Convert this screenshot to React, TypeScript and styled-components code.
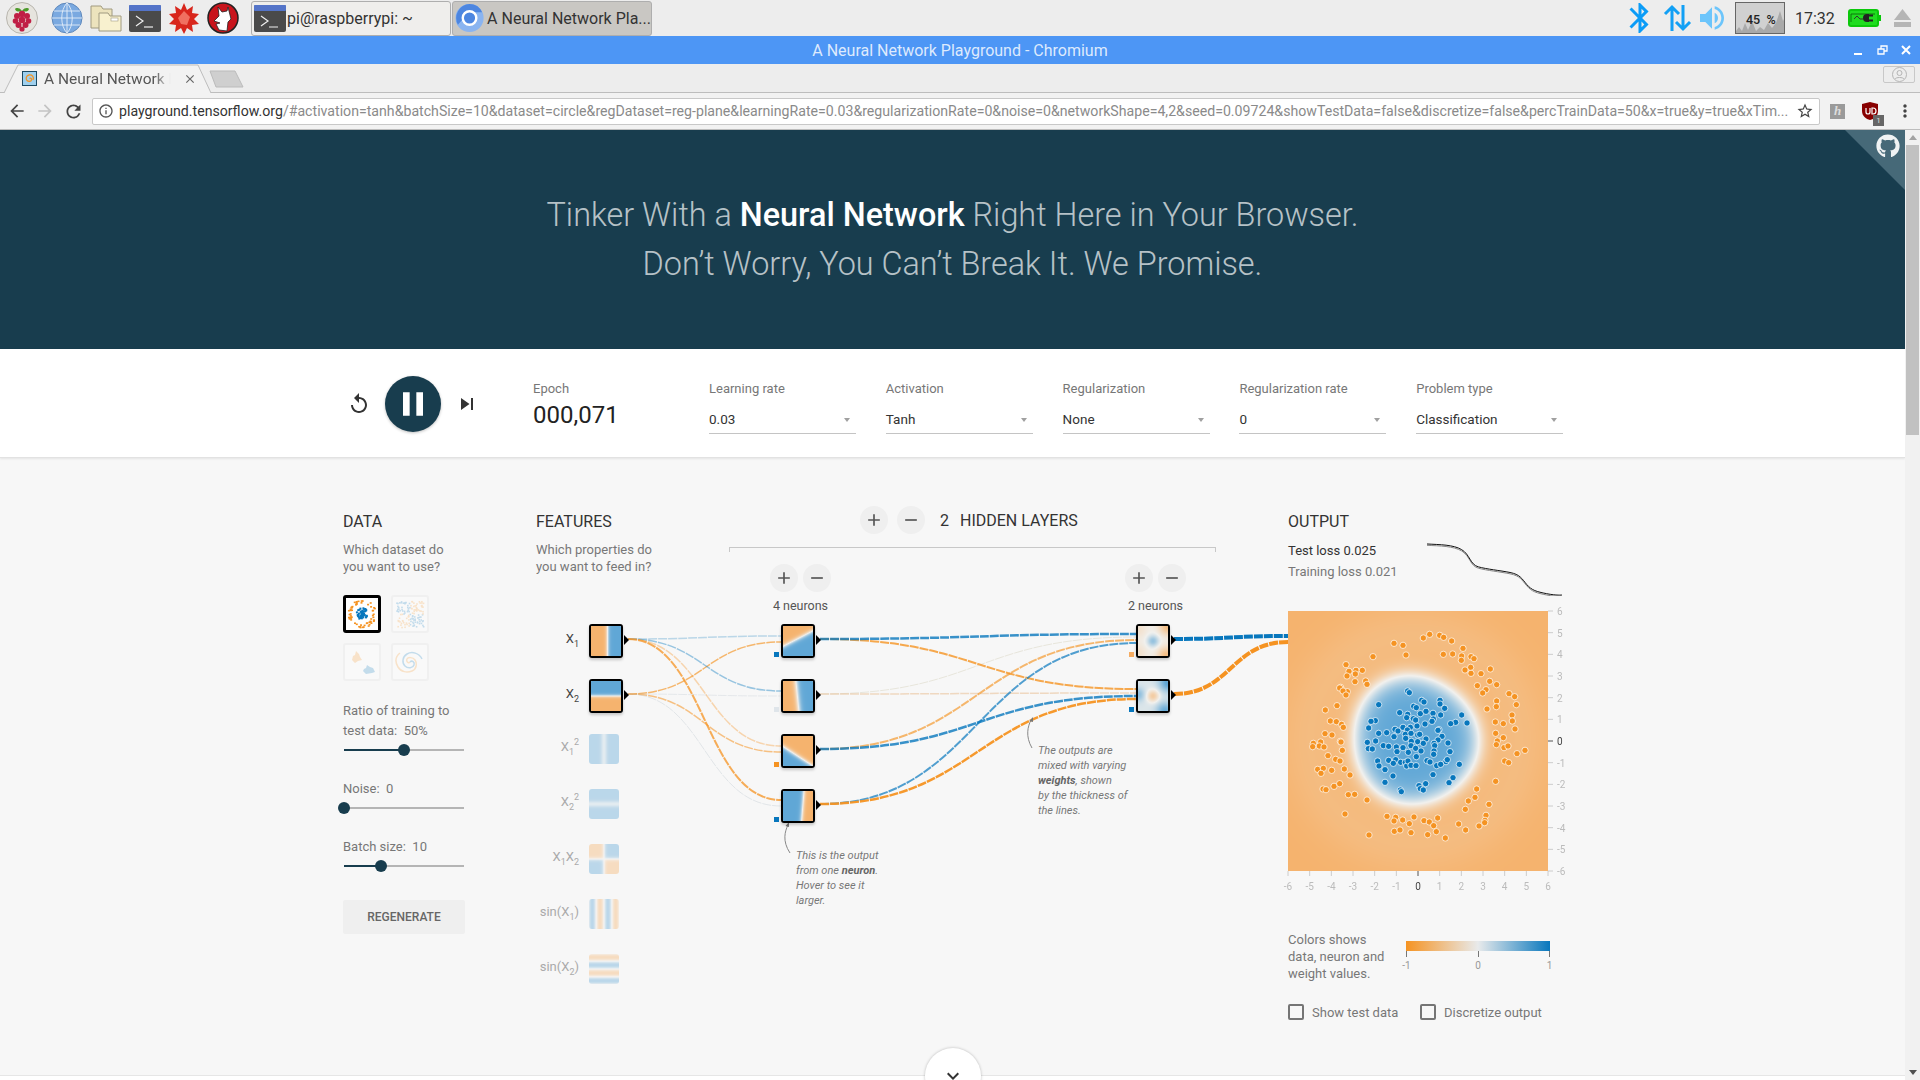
import React, { useEffect, useRef } from 'react';
import styled, { createGlobalStyle } from 'styled-components';
import {
  MdAdd,
  MdArrowBack,
  MdArrowForward,
  MdBluetooth,
  MdClose,
  MdInfoOutline,
  MdKeyboardArrowDown,
  MdMoreVert,
  MdPause,
  MdRefresh,
  MdRemove,
  MdReplay,
  MdSkipNext,
  MdStarBorder,
  MdVolumeUp,
} from 'react-icons/md';
import { FaGithub } from 'react-icons/fa';

const ORANGE = '#f59322';
const BLUE = '#0877bd';
const DARK = '#183d4e';

type HeatFn = (u: number, v: number) => number;

const GlobalStyle = createGlobalStyle`
  html, body {
    margin: 0;
    padding: 0;
    background: #ededed;
    font-family: Roboto, "Liberation Sans", sans-serif;
    overflow: hidden;
  }
  * { box-sizing: border-box; }
`;

const Screen = styled.div`
  width: 1920px;
  height: 1080px;
  display: flex;
  flex-direction: column;
  overflow: hidden;
`;

/* desktop panel */
const Panel = styled.div`
  height: 36px;
  flex: none;
  display: flex;
  align-items: center;
  background: #ededed;
  color: #333;
`;

const Launcher = styled.div`
  display: flex;
  align-items: center;
  width: 251px;
  padding-left: 6px;
  gap: 7px;
`;

const LaunchIcon = styled.svg<{ $gap?: number }>`
  width: 32px;
  height: 32px;
  flex: none;
  margin-left: ${p => p.$gap ?? 0}px;
`;

const Task = styled.div<{ $active?: boolean }>`
  height: 35px;
  width: 200px;
  display: flex;
  align-items: center;
  gap: 1px;
  padding-left: 2px;
  margin-right: 1px;
  font-size: 16px;
  white-space: nowrap;
  overflow: hidden;
  border: 1px solid #aeaeae;
  border-radius: 3px;
  background: ${p => (p.$active ? '#c9c7c3' : '#efeeec')};
`;

const Tray = styled.div`
  margin-left: auto;
  display: flex;
  align-items: center;
  height: 36px;
`;

const CpuBox = styled.div`
  position: relative;
  width: 50px;
  height: 32px;
  margin: 0 10px 0 7px;
  border: 1px solid #666;
  background: #d0d0d0;
  overflow: hidden;
`;

const CpuText = styled.span`
  position: absolute;
  left: 10px;
  top: 9px;
  font-size: 12.5px;
  font-weight: 500;
  color: #222;
  white-space: pre;
`;

const Clock = styled.span`
  font-size: 16px;
  color: #333;
  width: 53px;
`;

/* window title */
const TitleBar = styled.div`
  height: 28px;
  flex: none;
  position: relative;
  display: flex;
  align-items: center;
  justify-content: center;
  background: #4d96f5;
  color: rgba(255, 255, 255, 0.82);
  font-size: 16px;
`;

const WindowButtons = styled.div`
  position: absolute;
  right: 6px;
  top: 6px;
  display: flex;
  gap: 8px;
`;

const TabStrip = styled.div`
  height: 29px;
  flex: none;
  display: flex;
  background: #ededed;
  border-bottom: 1px solid #bdbdbd;
  position: relative;
`;

const ActiveTab = styled.div`
  position: relative;
  width: 209px;
  height: 29px;
  display: flex;
  align-items: center;
  padding-left: 22px;
  gap: 7px;
  flex: none;
`;

const TabShape = styled.svg`
  position: absolute;
  left: 0;
  top: 0;
`;

const TabTitle = styled.span`
  position: relative;
  width: 132px;
  white-space: nowrap;
  font-size: 15.5px;
  color: #555;
  -webkit-mask-image: linear-gradient(to right, #000 84%, transparent 96%);
`;

const NewTab = styled.svg`
  margin-top: 6px;
  flex: none;
`;

const ProfileButton = styled.div`
  position: absolute;
  right: 5px;
  top: 2px;
  width: 32px;
  height: 17px;
  border: 1px solid #c8c8c8;
  border-radius: 2px;
  display: flex;
  align-items: center;
  justify-content: center;
`;

const Toolbar = styled.div`
  height: 37px;
  flex: none;
  display: flex;
  align-items: center;
  background: #f2f2f2;
  border-bottom: 1px solid #bdbdbd;
  padding-left: 3px;
`;

const NavButton = styled.span<{ $faded?: boolean }>`
  width: 28px;
  height: 28px;
  flex: none;
  display: flex;
  align-items: center;
  justify-content: center;
  color: ${p => (p.$faded ? '#c4c4c4' : '#444')};
`;

const Omnibox = styled.div`
  width: 1728px;
  height: 27px;
  margin-left: 5px;
  flex: none;
  display: flex;
  align-items: center;
  background: #fff;
  border: 1px solid #c8c8c8;
  border-radius: 2px;
  padding: 0 5px 0 5px;
  gap: 5px;
  font-size: 14.15px;
  color: #8a8a8a;
  white-space: nowrap;
`;

const UrlText = styled.div`
  flex: 1;
  overflow: hidden;
  b {
    font-weight: 400;
    color: #333;
  }
`;

const Extensions = styled.div`
  display: flex;
  align-items: center;
  margin-left: 10px;
  gap: 15px;
`;

const HBadge = styled.span`
  width: 15px;
  height: 15px;
  background: #9a9a9a;
  color: #ddd;
  font-family: "Liberation Serif", serif;
  font-style: italic;
  font-weight: 700;
  font-size: 13px;
  display: flex;
  align-items: center;
  justify-content: center;
`;

const ShieldWrap = styled.span`
  position: relative;
  width: 20px;
  height: 20px;
  display: block;
`;

const ShieldCount = styled.span`
  position: absolute;
  right: -4px;
  bottom: -5px;
  width: 11px;
  height: 11px;
  background: #666;
  color: #ddd;
  font-size: 8px;
  line-height: 11px;
  text-align: center;
`;

/* page */
const Viewport = styled.div`
  flex: 1;
  display: flex;
  min-height: 0;
`;

const Page = styled.div`
  position: relative;
  width: 1905px;
  flex: none;
  background: #fff;
  overflow: hidden;
  display: flex;
  flex-direction: column;
`;

const Scrollbar = styled.div`
  flex: 1;
  background: #f1f1f1;
  display: flex;
  flex-direction: column;
  align-items: center;
  padding-top: 5px;
`;

const ScrollUp = styled.span`
  width: 0;
  height: 0;
  border-left: 4px solid transparent;
  border-right: 4px solid transparent;
  border-bottom: 5px solid #a3a3a3;
`;

const ScrollThumb = styled.div`
  width: 13px;
  height: 290px;
  margin-top: 5px;
  background: #c1c1c1;
`;

const ScrollDown = styled.span`
  width: 0;
  height: 0;
  margin-top: auto;
  margin-bottom: 5px;
  border-left: 4px solid transparent;
  border-right: 4px solid transparent;
  border-top: 5px solid #505050;
`;

const Hero = styled.header`
  position: relative;
  height: 219px;
  flex: none;
  background: ${DARK};
  display: flex;
  flex-direction: column;
  align-items: center;
  justify-content: center;
  color: rgba(255, 255, 255, 0.7);
  font-size: 32.4px;
  font-weight: 300;
  line-height: 49px;
  b {
    font-weight: 500;
    color: #fff;
  }
`;

const GithubCorner = styled.div`
  position: absolute;
  right: 0;
  top: 0;
  width: 60px;
  height: 60px;
  background: #466978;
  clip-path: polygon(0 0, 100% 0, 100% 100%);
  color: #f0f3f4;
  display: flex;
  justify-content: flex-end;
  padding: 4px 5px 0 0;
`;

const ControlBar = styled.div`
  height: 109px;
  flex: none;
  background: #fff;
  border-bottom: 1px solid #e2e2e2;
  box-shadow: 0 1px 2px rgba(0, 0, 0, 0.08);
  display: flex;
  padding-left: 347px;
  position: relative;
`;

const Transport = styled.div`
  display: flex;
  align-items: center;
  gap: 14px;
  height: 100%;
  padding-top: 1px;
  color: #333;
`;

const PlayButton = styled.div`
  width: 56px;
  height: 56px;
  border-radius: 50%;
  background: ${DARK};
  color: #fff;
  display: flex;
  align-items: center;
  justify-content: center;
  box-shadow: 0 1px 3px rgba(0, 0, 0, 0.25);
`;

const Field = styled.div<{ $width: number; $left?: number }>`
  width: ${p => p.$width}px;
  margin-left: ${p => p.$left ?? 29.8}px;
  padding-top: 32px;
  flex: none;
`;

const FieldLabel = styled.div`
  font-size: 13px;
  line-height: 16px;
  color: #777;
`;

const EpochValue = styled.div`
  font-size: 24px;
  line-height: 36px;
  color: #222;
`;

const SelectBox = styled.div`
  position: relative;
  height: 30px;
  margin-top: 7px;
  padding-top: 6px;
  line-height: 18px;
  font-size: 13.5px;
  color: #333;
  border-bottom: 1px solid #c4c4c4;
  &::after {
    content: '';
    position: absolute;
    right: 6px;
    top: 14px;
    border-left: 3.5px solid transparent;
    border-right: 3.5px solid transparent;
    border-top: 4px solid #a0a0a0;
  }
`;

const Main = styled.main`
  height: 617px;
  flex: none;
  background: #f7f7f7;
  display: flex;
  padding: 53px 0 0 343px;
`;

const DataColumn = styled.section`
  width: 193px;
  flex: none;
`;

const Heading = styled.h4`
  margin: 0 0 -2px;
  font-size: 16px;
  font-weight: 400;
  line-height: 22px;
  color: #333;
  text-transform: uppercase;
`;

const Hint = styled.p`
  margin: 10px 0 0;
  font-size: 13px;
  line-height: 17px;
  color: #777;
`;

const ThumbGrid = styled.div`
  display: grid;
  grid-template-columns: 38px 38px;
  gap: 10px;
  margin-top: 20px;
`;

const Thumb = styled.div<{ $selected?: boolean }>`
  width: 38px;
  height: 38px;
  border: ${p => (p.$selected ? '3px solid #000' : '2px solid #f0f0f0')};
  border-radius: 3px;
  background: ${p => (p.$selected ? '#fff' : '#f9f9f9')};
  svg {
    display: block;
    width: 100%;
    height: 100%;
    opacity: ${p => (p.$selected ? 1 : 0.22)};
  }
`;

const SliderLabel = styled.div<{ $top: number }>`
  margin-top: ${p => p.$top}px;
  font-size: 13px;
  line-height: 20px;
  color: #777;
  white-space: pre;
`;

const SliderTrack = styled.div`
  position: relative;
  width: 120px;
  height: 2px;
  margin: 8px 0 0 1px;
  background: #b5b5b5;
`;

const SliderFill = styled.div`
  height: 100%;
  background: ${DARK};
`;

const SliderThumb = styled.span`
  position: absolute;
  top: -5px;
  width: 12px;
  height: 12px;
  margin-left: -6px;
  border-radius: 50%;
  background: ${DARK};
`;

const RegenerateButton = styled.div`
  width: 122px;
  height: 34px;
  margin-top: 33px;
  background: #efefef;
  border-radius: 2px;
  display: flex;
  align-items: center;
  justify-content: center;
  font-size: 12px;
  font-weight: 500;
  color: #666;
`;

const NetworkColumn = styled.section`
  position: relative;
  width: 752px;
  flex: none;
`;

const NetworkHeader = styled.div`
  display: flex;
  align-items: flex-start;
`;

const FeaturesBlock = styled.div`
  width: 324px;
  flex: none;
`;

const LayerCount = styled.div`
  display: flex;
  align-items: center;
  margin-top: -5px;
  height: 28px;
  gap: 9px;
  position: relative;
  z-index: 2;
`;

const LayerCountText = styled.span`
  margin-left: 6px;
  font-size: 16px;
  color: #333;
  display: flex;
  gap: 11px;
  text-transform: uppercase;
`;

const RoundButton = styled.span`
  width: 28px;
  height: 28px;
  border-radius: 50%;
  background: #efefef;
  color: #555;
  display: flex;
  align-items: center;
  justify-content: center;
  flex: none;
`;

const Bracket = styled.div`
  position: absolute;
  left: 193px;
  top: 36px;
  width: 487px;
  height: 5px;
  border: 1px solid #c8c8c8;
  border-bottom: none;
`;

const LinkLayer = styled.svg`
  position: absolute;
  left: 0;
  top: 0;
  overflow: visible;
`;

const LayerControls = styled.div<{ $x: number }>`
  position: absolute;
  left: ${p => p.$x}px;
  top: 53px;
  width: 61px;
`;

const LayerButtons = styled.div`
  display: flex;
  gap: 5px;
`;

const NeuronCount = styled.div`
  margin-top: 6px;
  font-size: 12.5px;
  line-height: 16px;
  color: #555;
  text-align: center;
  white-space: nowrap;
`;

const FeatureRow = styled.div<{ $y: number; $active: boolean }>`
  position: absolute;
  left: 0;
  top: ${p => p.$y}px;
  display: flex;
  align-items: center;
  color: ${p => (p.$active ? '#444' : '#aaa')};
`;

const FeatureName = styled.div`
  width: 43px;
  margin: 0 10px 4px 0;
  text-align: right;
  font-size: 13px;
  line-height: 26px;
  white-space: nowrap;
  sub {
    font-size: 9px;
    vertical-align: -4px;
    line-height: 0;
  }
  sup {
    font-size: 9px;
    vertical-align: 6px;
    line-height: 0;
  }
`;

const Neuron = styled.div<{ $active: boolean }>`
  position: relative;
  width: ${p => (p.$active ? 34 : 30)}px;
  height: ${p => (p.$active ? 34 : 30)}px;
  border: ${p => (p.$active ? '2px solid #000' : 'none')};
  border-radius: 3px;
  box-shadow: ${p => (p.$active ? '0 2px 3px rgba(0, 0, 0, 0.2)' : 'none')};
  flex: none;
  canvas {
    display: block;
    border-radius: ${p => (p.$active ? 1 : 3)}px;
    opacity: ${p => (p.$active ? 1 : 0.4)};
  }
  &::after {
    content: ${p => (p.$active ? "''" : 'none')};
    position: absolute;
    right: -8px;
    top: 9px;
    border-left: 5px solid #000;
    border-top: 5px solid transparent;
    border-bottom: 5px solid transparent;
  }
`;

const HiddenNode = styled.div<{ $x: number; $y: number }>`
  position: absolute;
  left: ${p => p.$x}px;
  top: ${p => p.$y}px;
`;

const Bias = styled.span<{ $color: string }>`
  position: absolute;
  left: -9px;
  top: 26px;
  width: 5px;
  height: 5px;
  background: ${p => p.$color};
`;

const Callout = styled.p<{ $x: number; $y: number }>`
  position: absolute;
  left: ${p => p.$x}px;
  top: ${p => p.$y}px;
  margin: 0;
  font-size: 11px;
  font-style: italic;
  line-height: 15px;
  color: #777;
  white-space: nowrap;
  b {
    font-weight: 700;
    color: #666;
  }
`;

const OutputColumn = styled.section`
  width: 290px;
  flex: none;
  position: relative;
`;

const LossRow = styled.div`
  display: flex;
  height: 60px;
  margin-top: 9px;
`;

const LossText = styled.div`
  width: 139px;
  flex: none;
  font-size: 13px;
  line-height: 21px;
`;

const TestLoss = styled.div`
  color: #333;
`;

const TrainingLoss = styled.div`
  color: #777;
`;

const LossChart = styled.svg`
  width: 135px;
  height: 53px;
  margin-top: 3px;
  flex: none;
`;

const HeatBox = styled.div`
  position: relative;
  width: 260px;
  height: 260px;
  margin-top: 11px;
  canvas {
    display: block;
  }
`;

const Overlay = styled.svg`
  position: absolute;
  left: 0;
  top: 0;
  overflow: visible;
`;

const AxisText = styled.text<{ $zero?: boolean }>`
  font-family: Roboto, sans-serif;
  font-size: 10px;
  fill: ${p => (p.$zero ? '#444' : '#bbb')};
`;

const Legend = styled.div`
  display: flex;
  margin-top: 60px;
  height: 51px;
`;

const LegendText = styled.div`
  width: 118px;
  flex: none;
  font-size: 13px;
  line-height: 17px;
  color: #777;
`;

const LegendScale = styled.div`
  width: 144px;
  padding-top: 10px;
  flex: none;
`;

const GradientBar = styled.div`
  height: 10px;
  background: linear-gradient(to right, ${ORANGE}, #e8eaeb 50%, ${BLUE});
`;

const ScaleTicks = styled.div`
  display: flex;
  justify-content: space-between;
  font-size: 10px;
  line-height: 12px;
  color: #999;
`;

const ScaleTick = styled.span`
  width: 1px;
  height: 6px;
  background: #777;
  position: relative;
  display: block;
  margin-bottom: 3px;
`;

const ScaleItem = styled.span`
  width: 1px;
  display: flex;
  flex-direction: column;
  align-items: center;
  white-space: nowrap;
`;

const CheckRow = styled.div`
  display: flex;
  margin-top: 22px;
  height: 16px;
`;

const CheckItem = styled.label<{ $width: number }>`
  width: ${p => p.$width}px;
  display: flex;
  align-items: center;
  gap: 8px;
  font-size: 13px;
  color: #777;
  white-space: nowrap;
`;

const CheckBox = styled.span`
  width: 16px;
  height: 16px;
  flex: none;
  border: 2px solid #757575;
  border-radius: 2px;
`;

const Footer = styled.div`
  flex: 1;
  background: #fff;
  border-top: 1px solid #e6e6e6;
`;

const MoreButton = styled.div`
  position: absolute;
  left: 50%;
  top: 918px;
  width: 56px;
  height: 56px;
  margin-left: -28px;
  border-radius: 50%;
  background: #fff;
  box-shadow: 0 0 3px rgba(0, 0, 0, 0.25);
  color: #333;
  display: flex;
  justify-content: center;
  padding-top: 16px;
`;

/* heat maps */
const heatColor = (value: number): [number, number, number] => {
  const mid = [241, 240, 237];
  const end = value < 0 ? [245, 179, 110] : [96, 167, 214];
  const t = Math.min(1, Math.abs(value));
  return [0, 1, 2].map(i => mid[i] + (end[i] - mid[i]) * t) as [number, number, number];
};

const HeatCanvas: React.FC<{ fn: HeatFn; size: number }> = ({ fn, size }) => {
  const ref = useRef<HTMLCanvasElement>(null);
  useEffect(() => {
    const ctx = ref.current?.getContext('2d');
    if (!ctx) return;
    const image = ctx.createImageData(size, size);
    for (let y = 0; y < size; y++) {
      for (let x = 0; x < size; x++) {
        const [r, g, b] = heatColor(fn((x + 0.5) / size, (y + 0.5) / size));
        const at = (y * size + x) * 4;
        image.data[at] = r;
        image.data[at + 1] = g;
        image.data[at + 2] = b;
        image.data[at + 3] = 255;
      }
    }
    ctx.putImageData(image, 0, 0);
  }, [fn, size]);
  return <canvas ref={ref} width={size} height={size} />;
};

const blob: HeatFn = (u, v) => {
  const dx = u * 260 - 127;
  const dy = v * 260 - 129;
  const r = Math.hypot(dx, dy);
  const a = Math.atan2(dy, dx);
  const radius = 63 + 2.5 * Math.sin(2 * a) + 2 * Math.cos(2 * a + 2) + 1.5 * Math.cos(3 * a);
  const core = r < radius ? Math.tanh((radius - r) / 15) : Math.tanh((radius - r) / 11);
  const halo = r > radius ? 0.14 * Math.exp(-(((r - 105) / 30) ** 2)) : 0;
  return core + halo;
};

const bump = (u: number, v: number, cu: number, cv: number, spread: number) =>
  Math.exp(-((u - cu) ** 2 + (v - cv) ** 2) / spread);

const mixedUp: HeatFn = (u, v) =>
  0.65 * bump(u, v, 0.5, 0.5, 0.035) -
  0.85 * bump(u, v, 1, 0, 0.09) -
  0.85 * bump(u, v, 0.95, 1, 0.09) -
  0.25 * bump(u, v, 0, 0.9, 0.1) -
  0.25 * bump(u, v, 0, 0.1, 0.1);

const mixedDown: HeatFn = (u, v) =>
  -0.75 * bump(u, v, 0.5, 0.5, 0.04) +
  0.9 * bump(u, v, 1, 0.05, 0.09) +
  0.8 * bump(u, v, 0.9, 1, 0.08) +
  0.55 * bump(u, v, 0, 0.45, 0.05) +
  0.15;

const features: { name: React.ReactNode; active: boolean; fn: HeatFn }[] = [
  { name: <>X<sub>1</sub></>, active: true, fn: u => Math.tanh((u - 0.55) * 14) },
  { name: <>X<sub>2</sub></>, active: true, fn: (_, v) => -Math.tanh((v - 0.5) * 16) },
  { name: <>X<sub>1</sub><sup>2</sup></>, active: false, fn: u => 1 - 0.7 * Math.exp(-(((u - 0.5) / 0.1) ** 2)) },
  { name: <>X<sub>2</sub><sup>2</sup></>, active: false, fn: (_, v) => 1 - 0.7 * Math.exp(-(((v - 0.5) / 0.1) ** 2)) },
  { name: <>X<sub>1</sub>X<sub>2</sub></>, active: false, fn: (u, v) => Math.tanh((u - 0.5) * 14) * Math.tanh((0.5 - v) * 14) },
  { name: <>sin(X<sub>1</sub>)</>, active: false, fn: u => Math.sin(12 * (u - 0.5)) },
  { name: <>sin(X<sub>2</sub>)</>, active: false, fn: (_, v) => Math.sin(12 * (0.5 - v)) },
];

const hiddenNodes: { x: number; y: number; bias: string; fn: HeatFn }[] = [
  { x: 245, y: 113, bias: BLUE, fn: (u, v) => Math.tanh((v - (0.68 - 0.52 * u)) * 10) },
  { x: 245, y: 168, bias: '#dfe5ea', fn: (u, v) => Math.tanh((u - (0.43 + 0.1 * v)) * 9) },
  { x: 245, y: 223, bias: ORANGE, fn: (u, v) => Math.tanh((v - (0.35 + 0.65 * u)) * 10) },
  { x: 245, y: 278, bias: BLUE, fn: (u, v) => Math.tanh((0.7 - 0.08 * v - u) * 13) },
  { x: 600, y: 113, bias: '#f5ac62', fn: mixedUp },
  { x: 600, y: 168, bias: BLUE, fn: mixedDown },
];

type Link = [number, number, number, number, string, number, number];

const links: Link[] = [
  [92, 128, 245, 125, BLUE, 1.5, 0.25],
  [92, 183, 245, 131, ORANGE, 1.5, 0.65],
  [92, 128, 245, 180, BLUE, 1.5, 0.4],
  [92, 183, 245, 185, '#b8c4cc', 1, 0.3],
  [92, 128, 245, 235, ORANGE, 1.5, 0.35],
  [92, 183, 245, 241, ORANGE, 1.5, 0.55],
  [92, 128, 245, 289, ORANGE, 2, 0.75],
  [92, 183, 245, 295, '#b8c4cc', 1, 0.35],
  [284, 183, 600, 126, '#d8d4c0', 1, 0.5],
  [284, 183, 600, 182, '#e8b98a', 1.5, 0.5],
  [284, 128, 600, 178, ORANGE, 2, 0.8],
  [284, 238, 600, 129, ORANGE, 2, 0.65],
  [284, 293, 600, 132, BLUE, 2, 0.7],
  [284, 238, 600, 185, BLUE, 2.5, 0.8],
  [284, 293, 600, 188, ORANGE, 2.5, 0.95],
  [284, 128, 600, 123, BLUE, 2.5, 0.8],
  [638, 128, 752, 125, BLUE, 4, 1],
  [638, 183, 752, 131, ORANGE, 4, 1],
];

const curve = (x0: number, y0: number, x1: number, y1: number) => {
  const mid = (x0 + x1) / 2;
  return `M${x0} ${y0}C${mid} ${y0} ${mid} ${y1} ${x1} ${y1}`;
};

const orangeDots = [
  [460,414],[479,403],[509,406],[521,412],[545,423],[372,430],[399,436],[408,465],[309,470],[520,463],[548,462],[579,445],[575,468],[574,481],[603,470],[612,476],[602,502],[585,510],[603,520],[633,521],[661,507],[228,494],[237,514],[258,511],[277,511],[256,522],[231,528],[255,545],[287,543],[291,553],[212,562],[209,564],[232,575],[219,573],[228,585],[622,557],[659,544],[680,554],[648,569],[638,579],[717,581],[734,590],[739,614],[680,603],[679,620],[651,627],[201,617],[166,630],[726,645],[727,663],[676,666],[700,671],[735,687],[181,663],[199,665],[215,673],[220,682],[165,701],[186,705],[677,700],[700,713],[682,723],[679,734],[702,743],[714,738],[765,751],[741,761],[704,783],[716,788],[130,730],[128,740],[152,726],[148,738],[162,741],[211,724],[213,726],[217,751],[174,767],[197,778],[210,783],[223,807],[240,825],[143,808],[160,805],[153,820],[185,811],[159,867],[168,869],[192,859],[209,851],[235,884],[254,883],[291,900],[225,942],[677,844],[620,867],[615,892],[595,903],[586,928],[657,913],[648,946],[645,961],[644,968],[627,978],[587,990],[566,972],[503,954],[462,962],[478,966],[491,977],[499,995],[526,1014],[473,1004],[423,998],[418,971],[432,951],[398,960],[377,952],[372,963],[351,949],[373,994],[390,990],[297,1005],
];

const blueDots = [
  [413,573],[418,578],[455,601],[462,606],[510,601],[510,612],[524,625],[326,614],[431,619],[439,623],[389,638],[413,643],[410,653],[451,641],[468,634],[489,640],[512,645],[575,645],[591,669],[557,667],[542,671],[490,657],[486,664],[465,672],[430,656],[441,678],[437,660],[316,662],[303,664],[296,684],[326,700],[350,698],[375,688],[384,693],[399,682],[421,682],[412,690],[406,703],[407,715],[423,700],[443,705],[449,703],[372,710],[507,689],[504,691],[516,709],[504,720],[468,717],[443,725],[424,724],[460,730],[492,730],[494,737],[534,729],[292,727],[317,723],[295,746],[307,747],[340,737],[356,739],[379,741],[381,755],[399,743],[415,757],[423,737],[437,745],[453,753],[492,753],[491,763],[540,755],[439,770],[471,782],[480,786],[528,785],[532,779],[568,793],[323,783],[327,798],[345,809],[356,781],[377,779],[370,790],[392,787],[406,787],[410,798],[414,783],[423,796],[438,797],[500,797],[512,793],[489,824],[549,833],[537,848],[369,828],[345,847],[391,870],[394,875],[447,857],[451,866],[460,870],[467,851],
];

const axisValues = [-6, -5, -4, -3, -2, -1, 0, 1, 2, 3, 4, 5, 6];

/* deterministic scatter for the dataset thumbnails */
const scatter = (count: number, seed: number) => {
  let s = seed;
  const next = () => {
    s = (s * 9301 + 49297) % 233280;
    return s / 233280;
  };
  return Array.from({ length: count }, () => [next(), next()]);
};

const CircleThumb = () => (
  <svg viewBox="0 0 32 32">
    {scatter(60, 7).map(([a, b], i) => (
      <rect
        key={`o${i}`}
        x={16 + (10.5 + b * 3.5) * Math.cos(a * 6.28) - 1}
        y={16 + (10.5 + b * 3.5) * Math.sin(a * 6.28) - 1}
        width="2"
        height="1.6"
        fill={ORANGE}
      />
    ))}
    {scatter(50, 31).map(([a, b], i) => (
      <rect
        key={`b${i}`}
        x={16 + b * 6 * Math.cos(a * 6.28) - 1}
        y={16 + b * 6 * Math.sin(a * 6.28) - 1}
        width="2"
        height="2"
        fill={BLUE}
      />
    ))}
  </svg>
);

const XorThumb = () => (
  <svg viewBox="0 0 34 34">
    {scatter(130, 11).map(([a, b], i) => (
      <rect
        key={i}
        x={3 + a * 27}
        y={3 + b * 27}
        width="1.6"
        height="1.6"
        fill={(a - 0.5) * (b - 0.5) < 0 ? ORANGE : BLUE}
      />
    ))}
  </svg>
);

const GaussThumb = () => (
  <svg viewBox="0 0 34 34">
    <path d="M11 6l3 3 1 3 2 3-4 1-3 2-3-3 1-4 2-1z" fill={ORANGE} />
    <path d="M22 20l3 2 3 1 2 4-3 1-6 1-3-3 1-2 2-1z" fill={BLUE} />
  </svg>
);

const SpiralThumb = () => (
  <svg viewBox="0 0 34 34" fill="none" strokeWidth="1.5">
    <path d="M17 17c2-2 5 0 4 3s-6 4-9 1-3-9 2-12 12-1 15 5" stroke={BLUE} />
    <path d="M17 17c-2 2-4-1-3-3s6-2 8 1 2 9-3 11-11 1-14-4-3-10 2-14" stroke={ORANGE} />
  </svg>
);

const Slider: React.FC<{ percent: number }> = ({ percent }) => (
  <SliderTrack>
    <SliderFill style={{ width: `${percent}%` }} />
    <SliderThumb style={{ left: `${percent}%` }} />
  </SliderTrack>
);

const TerminalIcon: React.FC<{ gap?: number }> = ({ gap }) => (
  <LaunchIcon $gap={gap} viewBox="0 0 32 32">
    <rect x="0" y="3" width="32" height="27" rx="2" fill="#4a4a4a" />
    <rect x="0" y="3" width="32" height="6" rx="1" fill="#5474c8" />
    <path d="M7 14l7 5-7 5" fill="none" stroke="#eee" strokeWidth="1.2" />
    <path d="M15 25h9" stroke="#eee" strokeWidth="1.2" />
  </LaunchIcon>
);

const LOSS_PATH =
  'M471 128C510 130 550 130 575 145S600 190 625 197 690 208 720 214 755 232 770 250 800 272 830 278 876 282 876 282';

const App: React.FC = () => (
  <Screen>
    <GlobalStyle />
    <Panel>
      <Launcher>
        <LaunchIcon viewBox="0 0 32 32">
          <circle cx="16" cy="16" r="15.5" fill="#e6e4de" stroke="#b8b6ae" />
          <path d="M16 9c-3-4-6-3-7-2 1 3 4 3 7 2zm0 0c3-4 6-3 7-2-1 3-4 3-7 2z" fill="#4c9a2a" />
          <g fill="#c01f45">
            <circle cx="16" cy="12" r="3.2" />
            <circle cx="11" cy="14" r="3" />
            <circle cx="21" cy="14" r="3" />
            <circle cx="9.5" cy="19" r="2.8" />
            <circle cx="22.5" cy="19" r="2.8" />
            <circle cx="16" cy="18" r="3.3" />
            <circle cx="12.5" cy="23" r="3" />
            <circle cx="19.5" cy="23" r="3" />
            <circle cx="16" cy="27" r="2.6" />
          </g>
        </LaunchIcon>
        <LaunchIcon $gap={6} viewBox="0 0 32 32">
          <circle cx="16" cy="16" r="15" fill="#7aa9e0" stroke="#5f88bb" />
          <path d="M1 16h30M3 9h26M3 23h26M16 1v30M16 1c-7 7-7 23 0 30M16 1c7 7 7 23 0 30" fill="none" stroke="#e3edf8" strokeWidth="0.9" />
        </LaunchIcon>
        <LaunchIcon viewBox="0 0 32 32">
          <path d="M1 4h10l2 3h9v19H1z" fill="#ece3bd" stroke="#a09a80" />
          <path d="M9 11h9l2 3h11v15H9z" fill="#f8f1cf" stroke="#a09a80" />
          <rect x="21" y="16" width="7" height="3" fill="#fff" stroke="#a09a80" strokeWidth="0.6" />
        </LaunchIcon>
        <TerminalIcon />
        <LaunchIcon viewBox="0 0 32 32">
          <path
            d="M16 1l3 7 6-4-1 7 7 1-5 5 5 5-7 1 1 7-6-4-3 6-3-6-6 4 1-7-7-1 5-5-5-5 7-1-1-7 6 4z"
            fill="#d8261c"
          />
          <path d="M16 9l6 6-3 8-6-1-3-6z" fill="#f07060" />
        </LaunchIcon>
        <LaunchIcon viewBox="0 0 32 32">
          <circle cx="16" cy="16" r="15" fill="#c8141c" stroke="#222" strokeWidth="1.5" />
          <path d="M11 5l4 5 5-1 1-4 3 12-3 3-1 9-8-1-3-6 4-1-6-2 5-5z" fill="#fff" stroke="#222" strokeWidth="0.8" />
        </LaunchIcon>
      </Launcher>
      <Task>
        <TerminalIcon />
        pi@raspberrypi: ~
      </Task>
      <Task $active>
        <svg width="30" height="30" viewBox="0 0 30 30" style={{ marginRight: 2 }}>
          <circle cx="15" cy="15" r="14.5" fill="#8ab4f0" />
          <path d="M15 .5A14.5 14.5 0 0 0 3 22l7-8a5 5 0 0 1 5-5h13A14.5 14.5 0 0 0 15 .5z" fill="#4d86e0" />
          <circle cx="15" cy="15" r="7" fill="#4d86e0" stroke="#fff" strokeWidth="2.5" />
        </svg>
        <span>A Neural Network Pla...</span>
      </Task>
      <Tray>
        <MdBluetooth size={36} color="#0b9cf7" />
        <svg width="30" height="30" viewBox="0 0 30 30" style={{ marginLeft: 4 }} fill="none" stroke="#12a0f5" strokeWidth="3">
          <path d="M10 28V4M3 11l7-7 7 7" />
          <path d="M21 2v24M14 19l7 7 7-7" />
        </svg>
        <MdVolumeUp size={32} color="#6cc5fb" style={{ marginLeft: 4 }} />
        <CpuBox>
          <svg width="50" height="32" viewBox="0 0 50 32">
            <path d="M0 32V28L3 24 6 28 9 20 12 27 16 18 20 28 24 24 28 27 32 20 36 25 40 20 44 8 47 18 50 12V32Z" fill="#a9a9a9" />
          </svg>
          <CpuText>45  %</CpuText>
        </CpuBox>
        <Clock>17:32</Clock>
        <svg width="33" height="18" viewBox="0 0 33 18" style={{ marginRight: 13 }}>
          <rect x="1" y="1" width="29" height="16" rx="2" fill="#1fdc1f" stroke="#0bc80b" strokeWidth="2" />
          <rect x="30.500" y="6" width="2.500" height="6" fill="#0bc80b" />
          <path d="M3 5h24M3 5v8" stroke="#0a5a0a" strokeWidth="0.8" fill="none" />
          <path d="M6 10l3-3 3 3h3" stroke="#333" strokeWidth="1" fill="none" />
          <path d="M15 9a4 4 0 0 1 4-4h2v8h-2a4 4 0 0 1-4-4z" fill="#222" />
          <path d="M21 6.500h4M21 11.500h4" stroke="#222" strokeWidth="1.800" />
        </svg>
        <svg width="17" height="18" viewBox="0 0 17 18" style={{ marginRight: 9 }}>
          <path d="M8.500 0l8.500 11H0z" fill="#b5b5b5" />
          <rect x="0" y="13" width="17" height="5" fill="#b5b5b5" />
        </svg>
      </Tray>
    </Panel>

    <TitleBar>
      A Neural Network Playground - Chromium
      <WindowButtons>
        <svg width="16" height="16" viewBox="0 0 16 16"><path d="M4 12h8" stroke="#fff" strokeWidth="2" /></svg>
        <svg width="16" height="16" viewBox="0 0 16 16" fill="none" stroke="#fff" strokeWidth="1.3"><path d="M4 7h6v5H4zM7 7V4h6v5h-3" /></svg>
        <svg width="16" height="16" viewBox="0 0 16 16"><path d="M4 4l8 8M12 4l-8 8" stroke="#fff" strokeWidth="2" /></svg>
      </WindowButtons>
    </TitleBar>

    <TabStrip>
      <ActiveTab>
        <TabShape width="214" height="29" viewBox="0 0 214 29">
          <path d="M4 29L18 1H198L211 29" fill="#f2f2f2" stroke="#bdbdbd" />
        </TabShape>
        <svg width="15" height="15" viewBox="0 0 15 15" style={{ position: 'relative' }}>
          <rect x="0.5" y="0.5" width="14" height="14" fill="#9fd0ee" stroke="#1d4b63" />
          <path d="M7.5 7.5c1-1 2.5 0 2 1.500s-3 2-4.500.5-1-5 2-5.500 5.500 2 4 5" fill="none" stroke="#f59322" strokeWidth="1.300" />
        </svg>
        <TabTitle>A Neural Network P</TabTitle>
        <MdClose size={14} color="#666" style={{ position: 'relative' }} />
      </ActiveTab>
      <NewTab width="36" height="18" viewBox="0 0 36 18">
        <path d="M1 1H26L34 17H7z" fill="#cfcfcf" stroke="#bbb" />
      </NewTab>
      <ProfileButton>
        <svg width="15" height="15" viewBox="0 0 15 15" fill="none" stroke="#b5b5b5">
          <circle cx="7.5" cy="7.5" r="7" />
          <circle cx="7.5" cy="6" r="2.500" />
          <path d="M3 12c1-2 8-2 9 0" />
        </svg>
      </ProfileButton>
    </TabStrip>

    <Toolbar>
      <NavButton><MdArrowBack size={20} /></NavButton>
      <NavButton $faded><MdArrowForward size={20} /></NavButton>
      <NavButton><MdRefresh size={21} /></NavButton>
      <Omnibox>
        <MdInfoOutline size={16} color="#555" />
        <UrlText>
          <b>playground.tensorflow.org</b>
          /#activation=tanh&amp;batchSize=10&amp;dataset=circle&amp;regDataset=reg-plane&amp;learningRate=0.03&amp;regularizationRate=0&amp;noise=0&amp;networkShape=4,2&amp;seed=0.09724&amp;showTestData=false&amp;discretize=false&amp;percTrainData=50&amp;x=true&amp;y=true&amp;xTim...
        </UrlText>
        <MdStarBorder size={18} color="#444" />
      </Omnibox>
      <Extensions>
        <HBadge>h</HBadge>
        <ShieldWrap>
          <svg width="20" height="20" viewBox="0 0 20 20">
            <path d="M10 1l8 2v7c0 5-4 8-8 9-4-1-8-4-8-9V3z" fill="#800" />
            <path d="M6 7v4a2 2 0 0 0 4 0V7M12 7h1a2 2 0 0 1 0 6h-1z" fill="none" stroke="#fff" strokeWidth="1.200" />
          </svg>
          <ShieldCount>1</ShieldCount>
        </ShieldWrap>
        <MdMoreVert size={20} color="#444" />
      </Extensions>
    </Toolbar>

    <Viewport>
      <Page>
        <Hero>
          <div>Tinker With a <b>Neural Network</b> Right Here in Your Browser.</div>
          <div>Don’t Worry, You Can’t Break It. We Promise.</div>
          <GithubCorner>
            <FaGithub size={24} />
          </GithubCorner>
        </Hero>

        <ControlBar>
          <Transport>
            <MdReplay size={24} />
            <PlayButton><MdPause size={40} /></PlayButton>
            <MdSkipNext size={24} />
          </Transport>
          <Field $width={146} $left={54}>
            <FieldLabel>Epoch</FieldLabel>
            <EpochValue>000,071</EpochValue>
          </Field>
          <Field $width={147} $left={30}>
            <FieldLabel>Learning rate</FieldLabel>
            <SelectBox>0.03</SelectBox>
          </Field>
          <Field $width={147}>
            <FieldLabel>Activation</FieldLabel>
            <SelectBox>Tanh</SelectBox>
          </Field>
          <Field $width={147}>
            <FieldLabel>Regularization</FieldLabel>
            <SelectBox>None</SelectBox>
          </Field>
          <Field $width={147}>
            <FieldLabel>Regularization rate</FieldLabel>
            <SelectBox>0</SelectBox>
          </Field>
          <Field $width={147}>
            <FieldLabel>Problem type</FieldLabel>
            <SelectBox>Classification</SelectBox>
          </Field>
        </ControlBar>

        <Main>
          <DataColumn>
            <Heading>Data</Heading>
            <Hint>Which dataset do<br />you want to use?</Hint>
            <ThumbGrid>
              <Thumb $selected><CircleThumb /></Thumb>
              <Thumb><XorThumb /></Thumb>
              <Thumb><GaussThumb /></Thumb>
              <Thumb><SpiralThumb /></Thumb>
            </ThumbGrid>
            <SliderLabel $top={20}>Ratio of training to{'\n'}test data:  50%</SliderLabel>
            <Slider percent={50} />
            <SliderLabel $top={28}>Noise:  0</SliderLabel>
            <Slider percent={0} />
            <SliderLabel $top={28}>Batch size:  10</SliderLabel>
            <Slider percent={31} />
            <RegenerateButton>REGENERATE</RegenerateButton>
          </DataColumn>

          <NetworkColumn>
            <LinkLayer width="752" height="560" viewBox="0 0 752 560" fill="none">
              {links.map(([x0, y0, x1, y1, color, width, opacity], i) => (
                <path
                  key={i}
                  d={curve(x0, y0, x1, y1)}
                  stroke={color}
                  strokeWidth={width}
                  strokeOpacity={opacity}
                  strokeDasharray="9 1"
                />
              ))}
              <path d="M254 342C246 330 249 320 252 314" stroke="#888" />
              <path d="M253 311l-3.500 4 3.500 1z" fill="#777" />
              <path d="M496 237C489 225 492 215 495 209" stroke="#888" />
              <path d="M497 206l-3.500 4 3.500 1z" fill="#777" />
            </LinkLayer>

            <NetworkHeader>
              <FeaturesBlock>
                <Heading>Features</Heading>
                <Hint>Which properties do<br />you want to feed in?</Hint>
              </FeaturesBlock>
              <LayerCount>
                <RoundButton><MdAdd size={20} /></RoundButton>
                <RoundButton><MdRemove size={20} /></RoundButton>
                <LayerCountText><span>2</span><span>Hidden layers</span></LayerCountText>
              </LayerCount>
            </NetworkHeader>
            <Bracket />

            <LayerControls $x={234}>
              <LayerButtons>
                <RoundButton><MdAdd size={20} /></RoundButton>
                <RoundButton><MdRemove size={20} /></RoundButton>
              </LayerButtons>
              <NeuronCount>4 neurons</NeuronCount>
            </LayerControls>
            <LayerControls $x={589}>
              <LayerButtons>
                <RoundButton><MdAdd size={20} /></RoundButton>
                <RoundButton><MdRemove size={20} /></RoundButton>
              </LayerButtons>
              <NeuronCount>2 neurons</NeuronCount>
            </LayerControls>

            {features.map((feature, i) => (
              <FeatureRow key={i} $y={113 + i * 55} $active={feature.active}>
                <FeatureName>{feature.name}</FeatureName>
                <Neuron $active={feature.active}>
                  <HeatCanvas fn={feature.fn} size={30} />
                </Neuron>
              </FeatureRow>
            ))}

            {hiddenNodes.map((node, i) => (
              <HiddenNode key={i} $x={node.x} $y={node.y}>
                <Neuron $active>
                  <Bias $color={node.bias} />
                  <HeatCanvas fn={node.fn} size={30} />
                </Neuron>
              </HiddenNode>
            ))}

            <Callout $x={260} $y={337}>
              This is the output<br />from one <b>neuron</b>.<br />Hover to see it<br />larger.
            </Callout>
            <Callout $x={502} $y={232}>
              The outputs are<br />mixed with varying<br /><b>weights</b>, shown<br />by the thickness of<br />the lines.
            </Callout>
          </NetworkColumn>

          <OutputColumn>
            <Heading>Output</Heading>
            <LossRow>
              <LossText>
                <TestLoss>Test loss 0.025</TestLoss>
                <TrainingLoss>Training loss 0.021</TrainingLoss>
              </LossText>
              <LossChart viewBox="471 125 405 160" preserveAspectRatio="none" fill="none" strokeWidth="3">
                <path d={LOSS_PATH} stroke="#888" transform="translate(0 4)" />
                <path d={LOSS_PATH} stroke="#111" />
              </LossChart>
            </LossRow>
            <HeatBox>
              <HeatCanvas fn={blob} size={260} />
              <Overlay width="260" height="260" viewBox="54 333 780 780">
                {orangeDots.map(([x, y], i) => (
                  <circle key={`o${i}`} cx={x} cy={y} r="9.5" fill={ORANGE} stroke="#fff" strokeOpacity="0.85" strokeWidth="2.5" />
                ))}
                {blueDots.map(([x, y], i) => (
                  <circle key={`b${i}`} cx={x} cy={y} r="9.5" fill={BLUE} stroke="#fff" strokeOpacity="0.85" strokeWidth="2.5" />
                ))}
              </Overlay>
              <Overlay width="260" height="260" viewBox="0 0 260 260">
                {axisValues.map(value => {
                  const at = ((value + 6) / 12) * 260;
                  return (
                    <g key={value}>
                      <path d={`M260 ${260 - at}h5`} stroke={value === 0 ? '#555' : '#ccc'} />
                      <AxisText $zero={value === 0} x="269" y={264 - at}>{value}</AxisText>
                      <path d={`M${at} 260v5`} stroke={value === 0 ? '#555' : '#ccc'} />
                      <AxisText $zero={value === 0} x={at} y="279" textAnchor="middle">{value}</AxisText>
                    </g>
                  );
                })}
              </Overlay>
            </HeatBox>
            <Legend>
              <LegendText>Colors shows<br />data, neuron and<br />weight values.</LegendText>
              <LegendScale>
                <GradientBar />
                <ScaleTicks>
                  <ScaleItem><ScaleTick />-1</ScaleItem>
                  <ScaleItem><ScaleTick />0</ScaleItem>
                  <ScaleItem><ScaleTick />1</ScaleItem>
                </ScaleTicks>
              </LegendScale>
            </Legend>
            <CheckRow>
              <CheckItem $width={132}><CheckBox />Show test data</CheckItem>
              <CheckItem $width={132}><CheckBox />Discretize output</CheckItem>
            </CheckRow>
          </OutputColumn>
        </Main>
        <Footer />
        <MoreButton><MdKeyboardArrowDown size={24} /></MoreButton>
      </Page>
      <Scrollbar>
        <ScrollUp />
        <ScrollThumb />
        <ScrollDown />
      </Scrollbar>
    </Viewport>
  </Screen>
);

export default App;
